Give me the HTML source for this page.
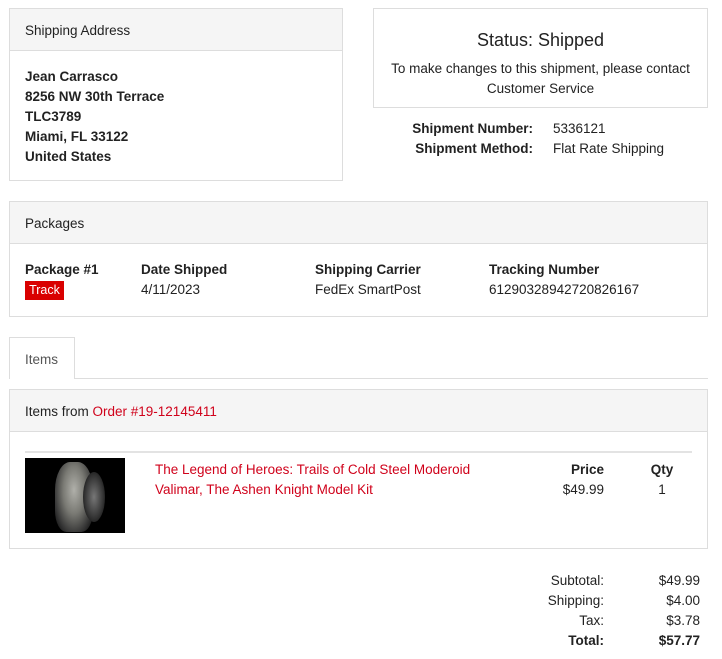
<!DOCTYPE html>
<html><head><meta charset="utf-8"><style>
*{margin:0;padding:0;box-sizing:border-box}
body{width:722px;height:659px;background:#fff;font-family:"Liberation Sans",sans-serif;font-size:13.5px;color:#222;position:relative;overflow:hidden}
.a{position:absolute;line-height:20px;white-space:nowrap;margin-top:1px}
.box{position:absolute;border:1px solid #ddd;background:#fff}
.hd{position:absolute;left:0;right:0;top:0;height:42px;background:#f5f5f5;border-bottom:1px solid #ddd}
b{font-weight:bold}
.r{color:#d0021b}
.rt{text-align:right}
</style></head><body>
<div class="box" style="left:9px;top:8px;width:334px;height:173px"><div class="hd"></div></div>
<div class="a" style="left:25px;top:20px">Shipping Address</div>
<div class="a" style="left:25px;top:66px;font-weight:bold">Jean Carrasco<br>8256 NW 30th Terrace<br>TLC3789<br>Miami, FL 33122<br>United States</div>

<div class="box" style="left:373px;top:8px;width:335px;height:100px"></div>
<div class="a" style="left:373px;width:335px;text-align:center;top:27px;font-size:18px;line-height:24px">Status: Shipped</div>
<div class="a" style="left:373px;width:335px;text-align:center;top:58px;white-space:normal;padding:0 12px">To make changes to this shipment, please contact Customer Service</div>
<div class="a rt" style="left:380px;width:153px;top:118px;font-weight:bold">Shipment Number:<br>Shipment Method:</div>
<div class="a" style="left:553px;top:118px">5336121<br>Flat Rate Shipping</div>

<div class="box" style="left:9px;top:201px;width:699px;height:116px"><div class="hd"></div></div>
<div class="a" style="left:25px;top:213px">Packages</div>
<div class="a" style="left:25px;top:259px;font-weight:bold">Package #1</div>
<div style="position:absolute;left:25px;top:281px;width:39px;height:19px;line-height:19px;background:#d90000;color:#fff;text-align:center;font-size:12.5px">Track</div>
<div class="a" style="left:141px;top:259px"><b>Date Shipped</b><br>4/11/2023</div>
<div class="a" style="left:315px;top:259px"><b>Shipping Carrier</b><br>FedEx SmartPost</div>
<div class="a" style="left:489px;top:259px"><b>Tracking Number</b><br>61290328942720826167</div>

<div style="position:absolute;left:9px;top:378px;width:699px;height:1px;background:#ddd"></div>
<div style="position:absolute;left:9px;top:337px;width:66px;height:42px;border:1px solid #ddd;border-bottom:none;background:#fff"></div>
<div class="a" style="left:25px;top:349px;color:#555">Items</div>

<div class="box" style="left:9px;top:389px;width:699px;height:160px"><div class="hd"></div></div>
<div class="a" style="left:25px;top:401px">Items from <span class="r">Order #19-12145411</span></div>
<div style="position:absolute;left:25px;top:451px;width:667px;height:2px;background:#e3e3e3"></div>
<div style="position:absolute;left:25px;top:458px;width:100px;height:75px;background:#000;overflow:hidden">
<div style="position:absolute;left:30px;top:4px;width:38px;height:70px;border-radius:40% 40% 30% 30%;background:radial-gradient(ellipse at 50% 40%,#b0b0aa 0%,#7a7a74 40%,#333 75%,#000 100%)"></div>
<div style="position:absolute;left:58px;top:14px;width:22px;height:50px;border-radius:50%;background:radial-gradient(ellipse,#777 0%,#333 60%,#000 100%)"></div>
</div>
<div class="a r" style="left:155px;top:459px">The Legend of Heroes: Trails of Cold Steel Moderoid<br>Valimar, The Ashen Knight Model Kit</div>
<div class="a rt" style="left:540px;width:64px;top:459px"><b>Price</b><br>$49.99</div>
<div class="a" style="left:632px;width:60px;text-align:center;top:459px"><b>Qty</b><br>1</div>

<div class="a rt" style="left:500px;width:104px;top:570px">Subtotal:<br>Shipping:<br>Tax:<br><b>Total:</b></div>
<div class="a rt" style="left:620px;width:80px;top:570px">$49.99<br>$4.00<br>$3.78<br><b>$57.77</b></div>
</body></html>
